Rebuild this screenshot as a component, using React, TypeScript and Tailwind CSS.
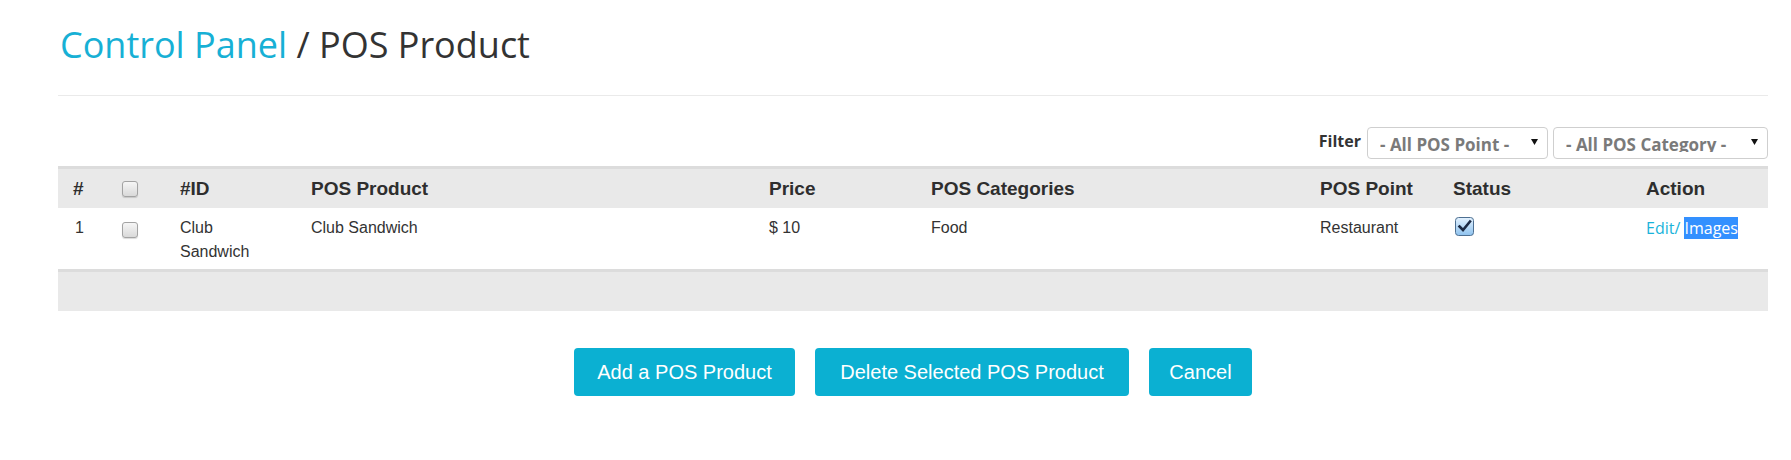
import React from "react";

const arial = "font-['Liberation_Sans',Arial,sans-serif]";
const open = "font-['Open_Sans',sans-serif]";

function Box() {
  return (
    <div className="w-[16px] h-[16px] rounded-[3px] border border-[#a3a3a3] bg-gradient-to-b from-[#f6f6f6] to-[#d9d9d9] shadow-[0_1px_1px_rgba(0,0,0,0.15)]" />
  );
}

function Checked() {
  return (
    <svg width="19" height="19" viewBox="0 0 19 19">
      <defs>
        <linearGradient id="cg" x1="0" y1="0" x2="0" y2="1">
          <stop offset="0" stopColor="#e4f2ff" />
          <stop offset="1" stopColor="#8ec2ee" />
        </linearGradient>
      </defs>
      <rect x="0.5" y="0.5" width="18" height="18" rx="3" fill="url(#cg)" stroke="#4d6f91" />
      <path d="M4.5 9.5 L8 13 L15 4.5" fill="none" stroke="#1c2a44" strokeWidth="2.6" strokeLinecap="square" />
    </svg>
  );
}

function Arrow() {
  return (
    <svg width="7" height="6" viewBox="0 0 7 6" className="absolute top-[11px] right-[9px]">
      <polygon points="0,0 7,0 3.5,6" fill="#111" />
    </svg>
  );
}

function Select({ label, w }: { label: string; w: string }) {
  return (
    <div className={`relative h-[32px] ${w} rounded-[4px] border border-[#cfcfcf] bg-white pl-[12px] pt-[6px]`}>
      <div className={`h-[18px] overflow-hidden leading-[22px] text-[17px] font-bold text-[#7a7a7a] whitespace-nowrap ${open}`}>
        {label}
      </div>
      <Arrow />
    </div>
  );
}

export default function App() {
  const th = "text-left align-top pl-[15px] pr-[15px] pt-[9px] pb-[8px] leading-[22px] text-[19px] font-bold text-[#2e2e2e]";
  const td = "text-left align-top pl-[15px] pr-[15px] pt-[8px] pb-[5px] leading-[24px] text-[16px] text-[#333]";
  return (
    <div className="w-[1791px] h-[460px] bg-white">
      <div className="ml-[58px] w-[1710px]">
        <div className="pt-[25px] pb-[30px] border-b border-[#eaeaea]">
          <h1 className={`text-[36px] leading-[40px] ml-[2px] text-[#333] ${open}`}>
            <span className="text-[#17b0d5]">Control Panel</span> / POS Product
          </h1>
        </div>

        <div className="mt-[31px] flex justify-end items-start gap-[5px]">
          <div className={`mt-[3px] mr-[1px] text-[16px] leading-[22px] font-bold text-[#333] ${open}`}>Filter</div>
          <Select label="- All POS Point -" w="w-[181px]" />
          <Select label="- All POS Category -" w="w-[215px]" />
        </div>

        <table className={`mt-[7px] w-full table-fixed border-collapse ${arial}`}>
          <colgroup>
            <col className="w-[49px]" />
            <col className="w-[58px]" />
            <col className="w-[131px]" />
            <col className="w-[458px]" />
            <col className="w-[162px]" />
            <col className="w-[389px]" />
            <col className="w-[133px]" />
            <col className="w-[193px]" />
            <col className="w-[137px]" />
          </colgroup>
          <thead>
            <tr className="bg-[#e9e9e9] border-t-[3px] border-[#dcdcdc]">
              <th className={th}>#</th>
              <th className={th}>
                <div className="mt-[3px]">
                  <Box />
                </div>
              </th>
              <th className={th}>#ID</th>
              <th className={th}>POS Product</th>
              <th className={th}>Price</th>
              <th className={th}>POS Categories</th>
              <th className={th}>POS Point</th>
              <th className={th}>Status</th>
              <th className={th}>Action</th>
            </tr>
          </thead>
          <tbody>
            <tr className="bg-white">
              <td className={td}>
                <span className="ml-[2px]">1</span>
              </td>
              <td className={td}>
                <div className="mt-[6px]">
                  <Box />
                </div>
              </td>
              <td className={td}>Club Sandwich</td>
              <td className={td}>Club Sandwich</td>
              <td className={td}>$ 10</td>
              <td className={td}>Food</td>
              <td className={td}>Restaurant</td>
              <td className={td}>
                <div className="mt-[1px] ml-[2px]">
                  <Checked />
                </div>
              </td>
              <td className={`${td} ${open}`}>
                <span className="text-[#19b3da]">Edit/</span>{" "}
                <span className="bg-[#3390ff] text-white">Images</span>
              </td>
            </tr>
          </tbody>
          <tfoot>
            <tr className="bg-[#e9e9e9] border-t-[3px] border-[#dcdcdc]">
              <td colSpan={9} className="h-[40px]"></td>
            </tr>
          </tfoot>
        </table>

        <div className={`mt-[37px] flex justify-center gap-[20px] ${arial}`}>
          <button className="w-[221px] h-[48px] rounded-[4px] bg-[#0bb0d2] text-white text-[20px] flex items-center justify-center">
            Add a POS Product
          </button>
          <button className="w-[314px] h-[48px] rounded-[4px] bg-[#0bb0d2] text-white text-[20px] flex items-center justify-center">
            Delete Selected POS Product
          </button>
          <button className="w-[103px] h-[48px] rounded-[4px] bg-[#0bb0d2] text-white text-[20px] flex items-center justify-center">
            Cancel
          </button>
        </div>
      </div>
    </div>
  );
}
